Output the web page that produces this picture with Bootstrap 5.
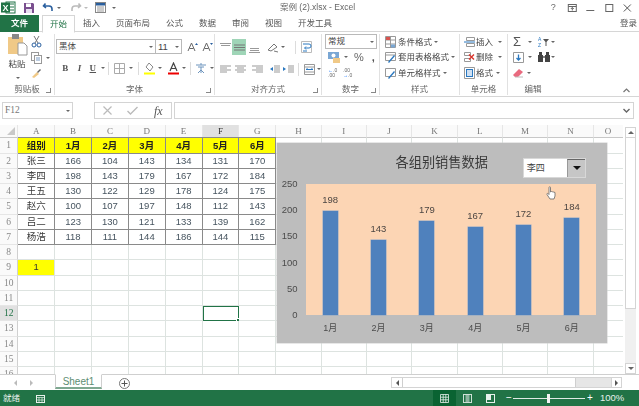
<!DOCTYPE html>
<html lang="zh-CN"><head><meta charset="utf-8"><title>案例 (2).xlsx - Excel</title>
<link href="https://cdn.jsdelivr.net/npm/bootstrap@5.3.0/dist/css/bootstrap.min.css" rel="stylesheet">
<style>
html,body{width:639px;height:406px;overflow:hidden;margin:0;background:#fff}
body{font-family:"Liberation Sans","Noto Sans CJK SC",sans-serif;font-size:8.5px;line-height:1;color:#444}
svg{display:block;flex:none}
.app{width:639px;height:406px;filter:blur(.3px)}
.titlebar{height:15px;padding-left:1px}
.qa-left{width:279px;gap:0}
.doc-title{color:#666;font-size:8.5px}
.win-btns{gap:0;color:#666}
.win-btns>*{width:18.6px;display:flex;justify-content:center}
.tabbar{height:17px;border-bottom:1px solid #d6d6d6;color:#555}
.xtab{padding:0 8px;line-height:17px;height:17px;white-space:nowrap}
.xtab-file{width:39px;margin-right:3px;background:#217346;color:#fff;text-align:center;padding:0;font-weight:700}
.xtab-on{color:#217346;border:1px solid #d6d6d6;border-bottom-color:#fff;height:18px;padding:0 7px;line-height:16px;background:#fff}
.login{margin-left:auto;margin-right:2px;line-height:17px}
.ribbon{height:65px;border-bottom:1px solid #d6d6d6}
.rgroup{border-right:1px solid #e1e1e1;margin:2px 0 1px;position:relative}
.rbody{height:50px}
.rbody-pad{padding-top:5px}
.rlabel{height:11px;text-align:center;color:#666;line-height:11px}
.launch{position:absolute;right:3px;bottom:2px;width:5px;height:5px;border-right:1px solid #888;border-bottom:1px solid #888}
.g-clip{width:55px}.g-font{width:160px}.g-align{width:107px}.g-num{width:58px}.g-style{width:80px}.g-cell{width:48px}.g-edit{width:50px;border-right:0}
.rrow{height:16px}
.cr{width:0;height:0;border-left:2px solid transparent;border-right:2px solid transparent;border-top:2px solid #666;flex:none;display:block}
.vsep{width:1px;height:13px;background:#dcdcdc;flex:none}
.fld{border:1px solid #b9b9b9;height:15px;background:#fff;padding:0 2px;line-height:13px;color:#444}
.paste-col{width:29px;padding-left:6px}
.paste-txt{margin-top:4px;margin-left:-1px;margin-bottom:8px}
.clip-col{padding-top:2px;padding-left:2px;gap:4px}
.fnt-name{width:100px}.fnt-size{width:27px;margin-left:-1px}
.xb{width:15px;text-align:center;font-weight:700;font-size:9px;color:#555;font-family:"Liberation Serif",serif}
.hl{background:#9fd5b7;width:14px;height:16px;display:flex;align-items:center;justify-content:center;flex:none}
.st-row{height:15.5px;gap:2px;padding-left:5px;white-space:nowrap}
.fbar{height:28px;padding:5px 5px 6px 2px}
.namebox{width:71px;font-family:"Liberation Serif",serif;color:#777;font-size:9.5px;height:17px;line-height:15px;border-color:#d4d4d4}
.fx-box{width:78px;margin-left:21px;height:17px;border:1px solid #d4d4d4;gap:0}
.fx-box>*{width:26px;display:flex;justify-content:center;text-align:center}
.fx-txt{font-family:"Liberation Serif",serif;font-style:italic;font-size:12px;color:#555}
.fml{margin-left:2px;height:17px;border:1px solid #d4d4d4;padding-right:3px}
.work{height:249px;position:relative;overflow:hidden}
.grid-wrap{width:623px;height:249px;overflow:hidden;position:relative}
.sheetgrid{display:grid;grid-template-columns:18.3px repeat(7,36.85px) repeat(7,45.35px) 30px;grid-template-rows:13.3px repeat(16,15.27px)}
.sheetgrid>div{border-right:1px solid #dde3e0;border-bottom:1px solid #dde3e0;font-size:9.5px;text-align:center;line-height:14px;color:#46545f;white-space:nowrap;position:relative}
.sheetgrid>.ch{background:#fafafa;color:#777;font-family:"Liberation Serif",serif;font-size:9px;line-height:13px;border-color:#e6e6e6;border-bottom-color:#c8c8c8}
.sheetgrid>.rh{background:#fafafa;color:#888;font-family:"Liberation Serif",serif;font-size:9.5px;border-color:#d0d0d0;border-bottom-color:#e6e6e6}
.sheetgrid>.on{background:#e1e1e1;color:#217346}
.sheetgrid>.ch.on{border-bottom:1px solid #217346;color:#333}
.corner::after{content:"";position:absolute;right:2px;bottom:2px;border-style:solid;border-width:0 0 8px 8px;border-color:transparent transparent #c9c9c9 transparent}
.sheetgrid>.th{background:#ff0;color:#222;font-weight:700;border-color:#8a8a8a;border-top:1px solid #8a8a8a;margin-top:-1px;line-height:15px}
.sheetgrid>.bd{border-color:#8a8a8a}
.sheetgrid>.nm{color:#3a3a3a}
.sheetgrid>.ye{background:#ff0;color:#333}
.sheetgrid>.sel{outline:1px solid #217346;outline-offset:-1px}
.sel::after{content:"";position:absolute;right:-2px;bottom:-2px;width:4px;height:4px;background:#217346;border:1px solid #fff}
.xchart{position:absolute;left:276.7px;top:17.5px;width:330px;height:200px;background:#bdbdbd;box-shadow:0 0 0 .5px #cfcfcf}
.ctitle{height:41.5px;text-align:center;font-size:13.2px;line-height:39px;color:#3a3a3a}
.cmain{height:131px}
.yaxis{width:29.3px;margin:-6px 0;padding-right:8.5px;text-align:right;color:#4c4c4c;font-size:9.5px;line-height:12px}
.plot{width:290px;background:#fcd5b4}
.pcol{width:48.33px}
.pval{font-size:9.5px;color:#4c4642;line-height:11px;margin-bottom:6px}
.pbar{width:15px;background:#4f81bd;box-shadow:0 0 0 .5px #8aa5c8}
.cats{padding-left:29.3px;width:319.3px}
.cats>div{width:48.33px;text-align:center;color:#4c4c4c;font-size:9px;line-height:27px}
.combo{position:absolute;left:246px;top:15.4px;width:63.5px;height:20px;background:#fff;border:1px solid #d8d8d8;padding-left:3px;line-height:18px;font-size:9px;color:#444}
.combo-btn{width:18px;height:18px;margin-left:auto;background:#c6c6c6;border-top:1px solid #666;border-left:1px solid #999;display:flex;align-items:center;justify-content:center}
.hand{position:absolute;left:269px;top:43px}
.vscroll{width:16px;height:249px;position:relative;padding:2px 2px 0}
.vb{height:11px;width:11px;border:1px solid #d4d4d4;background:#fff;display:flex;align-items:center;justify-content:center;flex:none}
.vth{height:171px;width:11px;border:1px solid #d4d4d4;border-top:0;background:#fff;flex:none}
.vtr{background:#f0f0f0;width:11px;height:54px;flex:none}
.tri-u{width:0;height:0;border-left:3px solid transparent;border-right:3px solid transparent;border-bottom:3px solid #666}
.tri-d{width:0;height:0;border-left:3px solid transparent;border-right:3px solid transparent;border-top:3px solid #666}
.tabsrow{height:16px;border-top:1px solid #cfcfcf;position:relative;background:#fff}
.nav-arrows{width:55px;gap:13px;padding-left:14px}
.tri-l{width:0;height:0;border-top:3px solid transparent;border-bottom:3px solid transparent;border-right:3px solid #bbb}
.tri-r{width:0;height:0;border-top:3px solid transparent;border-bottom:3px solid transparent;border-left:3px solid #bbb}
.sheettab{width:47px;height:15px;margin-top:-1px;border:1px solid #cfcfcf;border-top-color:#fff;border-bottom:2px solid #7fa891;color:#5d8d72;font-size:10px;line-height:13px;text-align:center;background:#fff}
.addsh{margin-left:17px}
.hscroll{margin-left:auto;margin-right:17px;width:231px;height:11px;border:1px solid #d4d4d4;margin-top:2px}
.hb{width:10px;display:flex;align-items:center;justify-content:center;background:#fff}
.hth{width:174px;background:#fff;border:1px solid #cfcfcf;border-width:0 1px}
.htr{background:#e6e6e6;flex:1}
.hb-r{border-left:1px solid #d4d4d4}
.statusbar{height:16px;background:#217346;color:#e8f1ec;font-size:8.5px;padding-left:3px}
.ready{width:33px}
.st-right{margin-left:auto;height:16px;margin-right:9px}
.vw{width:23px;height:16px;display:flex;align-items:center;justify-content:center}
.vw-on{background:#0a6332}
.zoomtrack{width:72px;height:1px;background:#dfe9e3;position:relative;margin:0 2px 0 2px}
.zoomknob{position:absolute;left:34px;top:-4px;width:3px;height:9px;background:#f2f2f2}
.zoomtxt{width:36px;padding-left:6px;font-size:9.5px;white-space:nowrap}
</style></head><body>
<div class="app d-flex flex-column">
 <div class="titlebar d-flex align-items-center">
  <div class="qa-left d-flex align-items-center">
   <svg width="15" height="13" viewBox="0 0 15 13"><rect x="5" y="1" width="9" height="11" fill="#fff" stroke="#217346"/><path d="M9 3h4M9 6h4M9 9h4" stroke="#217346"/><rect x="0" y="1.500" width="9" height="10" fill="#217346"/><text x="1.600" y="10" font-size="9" font-weight="700" fill="#fff">X</text></svg>
   <svg style="margin-left:7px" width="12" height="12" viewBox="0 0 12 12"><path d="M1 1h9l1 1v9H1z" fill="#7a4f8f"/><rect x="3" y="1.500" width="5" height="3.500" fill="#fff"/><rect x="3" y="7" width="6" height="4" fill="#e8dff0"/></svg>
   <svg style="margin-left:7px" width="12" height="11" viewBox="0 0 12 11"><path d="M3.500 1.500 1.500 4l2.500 2M2 4h5a3 3 0 0 1 3 3v2" fill="none" stroke="#2a5f9e" stroke-width="1.600"/></svg>
   <span class="cr" style="margin-left:3px"></span>
   <svg style="margin-left:9px" width="12" height="11" viewBox="0 0 12 11"><path d="M8.500 1.500 10.500 4 8 6M10 4H5a3 3 0 0 0-3 3v2" fill="none" stroke="#bbb" stroke-width="1.600"/></svg>
   <span class="cr" style="margin-left:2px;border-top-color:#bbb"></span>
   <svg style="margin-left:7px" width="11" height="11" viewBox="0 0 11 11"><rect x=".5" y=".5" width="10" height="10" fill="#fff" stroke="#888"/><rect x="1" y="1" width="9" height="2.500" fill="#2a5f9e"/><path d="M2 5h7M2 7h7M2 9h7" stroke="#999"/></svg>
   <span class="cr" style="margin-left:6px"></span>
  </div>
  <div class="doc-title">案例 (2).xlsx - Excel</div>
  <div class="win-btns ms-auto d-flex align-items-center" style="margin-right:2px">
   <span style="font-size:9px">?</span>
   <svg width="9" height="8" viewBox="0 0 9 8"><rect x=".5" y=".5" width="8" height="7" fill="none" stroke="#666"/><path d="M.5 2.500h8M4.500 6.500V3.500M3 5l1.500-1.500L6 5" fill="none" stroke="#666"/></svg>
   <svg width="8" height="8" viewBox="0 0 8 8"><path d="M0 6.500h8" stroke="#666"/></svg>
   <svg width="8" height="8" viewBox="0 0 8 8"><rect x=".5" y=".5" width="7" height="7" fill="none" stroke="#666"/></svg>
   <svg width="8" height="8" viewBox="0 0 8 8"><path d="M.5.500l7 7M7.500.500l-7 7" stroke="#555"/></svg>
  </div>
 </div>
 <div class="tabbar d-flex">
  <div class="xtab xtab-file">文件</div>
  <div class="xtab xtab-on">开始</div>
  <div class="xtab">插入</div><div class="xtab">页面布局</div><div class="xtab">公式</div><div class="xtab">数据</div><div class="xtab">审阅</div><div class="xtab">视图</div><div class="xtab">开发工具</div>
  <div class="login">登录</div>
 </div>
 <div class="ribbon d-flex">
  <div class="rgroup g-clip">
   <div class="rbody d-flex">
    <div class="paste-col d-flex flex-column align-items-center">
     <svg width="20" height="22" viewBox="0 0 20 22"><rect x="0" y="3" width="15" height="17" fill="#f0c987"/><rect x="4" y="0" width="7" height="5" fill="#888"/><path d="M10 9h6l3 3v9h-9z" fill="#fff" stroke="#999"/></svg>
     <div class="paste-txt">粘贴</div><span class="cr"></span>
    </div>
    <div class="clip-col d-flex flex-column">
     <svg width="11" height="12" viewBox="0 0 11 12"><path d="M3 0l4 7M8 0 4 7" stroke="#777"/><circle cx="3" cy="9" r="2" fill="none" stroke="#2a5f9e"/><circle cx="8" cy="9" r="2" fill="none" stroke="#2a5f9e"/></svg>
     <div class="d-flex align-items-center gap-1"><svg width="11" height="12" viewBox="0 0 11 12"><rect x=".5" y=".5" width="7" height="8" fill="#fff" stroke="#999"/><rect x="3.500" y="3.500" width="7" height="8" fill="#fff" stroke="#999"/><path d="M5 6h4M5 8h4" stroke="#7a9cc4"/></svg><span class="cr"></span></div>
     <svg width="11" height="11" viewBox="0 0 11 11"><path d="M1 9l5-5 2 2-5 4z" fill="#f0c987"/><path d="M6 4l3-3 1 1-3 3z" fill="#666"/></svg>
    </div>
   </div>
   <div class="rlabel">剪贴板</div><span class="launch"></span>
  </div>
  <div class="rgroup g-font">
   <div class="rbody">
    <div class="d-flex align-items-center" style="padding:5px 0 0 1px">
     <div class="fld fnt-name d-flex align-items-center justify-content-between"><span>黑体</span><span class="cr"></span></div>
     <div class="fld fnt-size d-flex align-items-center justify-content-between"><span style="font-size:9.5px">11</span><span class="cr"></span></div>
     <svg style="margin-left:5px" width="11" height="10" viewBox="0 0 11 10"><path d="M1 9 4.500 1 8 9M2.500 6.500h4" fill="none" stroke="#666"/><path d="M8 3l1.500-2L11 3" fill="#2a5f9e"/></svg>
     <svg style="margin-left:4px" width="11" height="10" viewBox="0 0 11 10"><path d="M1 9 4.500 1 8 9M2.500 6.500h4" fill="none" stroke="#666"/><path d="M8 1l1.500 2L11 1" fill="#2a5f9e"/></svg>
    </div>
    <div class="rrow d-flex align-items-center" style="margin-top:6px;padding-left:3px">
     <span class="xb">B</span><span class="xb fst-italic">I</span><span class="xb text-decoration-underline" style="width:13px">U</span><span class="cr" style="margin:0 3px 0 2px"></span>
     <span class="vsep"></span>
     <svg style="margin:0 4px 0 5px" width="11" height="11" viewBox="0 0 11 11"><path d="M.5.500h10v10H.5zM5.500.500v10M.5 5.500h10" fill="none" stroke="#aaa"/></svg><span class="cr"></span>
     <span class="vsep" style="margin-left:5px"></span>
     <svg style="margin:0 3px 0 5px" width="11" height="13" viewBox="0 0 11 13"><path d="M5 1l4 4-3 4-4-4z" fill="#fff" stroke="#888"/><rect y="10.500" width="11" height="2" fill="#ff0"/></svg><span class="cr"></span>
     <svg style="margin:0 3px 0 6px" width="11" height="13" viewBox="0 0 11 13"><path d="M2 9 5.500 1 9 9M3.500 6.500h4" fill="none" stroke="#444" stroke-width="1.200"/><rect y="10.500" width="11" height="2" fill="#e00"/></svg><span class="cr"></span>
     <span class="vsep" style="margin-left:4px"></span>
     <svg style="margin:0 3px 0 4px" width="12" height="12" viewBox="0 0 12 12"><path d="M1 3h10M6 1v2M3 5h6M6 5v6M3 11l3-3 3 3" fill="none" stroke="#6d94bd"/></svg><span class="cr"></span>
    </div>
   </div>
   <div class="rlabel">字体</div><span class="launch"></span>
  </div>
  <div class="rgroup g-align">
   <div class="rbody rbody-pad">
    <div class="rrow d-flex align-items-center" style="padding-left:5px">
     <svg width="11" height="11" viewBox="0 0 11 11"><path d="M0 1.500h11M1 3.500h9" stroke="#999"/></svg>
     <span class="hl" style="margin-left:1px"><svg width="11" height="7" viewBox="0 0 11 7"><path d="M0 1h11M0 3.500h11M0 6h11" stroke="#777"/></svg></span>
     <svg style="margin-left:3px" width="11" height="11" viewBox="0 0 11 11"><path d="M1 6.500h9M1 8.500h9M0 10.500h11" stroke="#999"/></svg>
     <svg style="margin-left:7px" width="12" height="11" viewBox="0 0 12 11"><path d="M1 8l6-6 3 3-6 4zM7 9l4 1" fill="none" stroke="#777"/></svg><span class="cr" style="margin-left:2px"></span>
     <span class="vsep" style="margin-left:10px"></span>
     <svg style="margin-left:5px" width="11" height="12" viewBox="0 0 11 12"><path d="M.5.500h10v11H.5z" fill="none" stroke="#bbb"/><path d="M2 3h6a1.500 1.500 0 0 1 0 4H4M5 5.500 3.500 7 5 8.500M2 10h4" fill="none" stroke="#2a78c0"/></svg>
    </div>
    <div class="rrow d-flex align-items-center" style="margin-top:6px;padding-left:5px">
     <svg width="11" height="8" viewBox="0 0 11 8"><path d="M0 1h11M0 3h7M0 5h11M0 7h7" stroke="#999"/></svg>
     <svg style="margin-left:4px" width="11" height="8" viewBox="0 0 11 8"><path d="M0 1h11M2 3h7M0 5h11M2 7h7" stroke="#999"/></svg>
     <svg style="margin-left:6px" width="11" height="8" viewBox="0 0 11 8"><path d="M0 1h11M4 3h7M0 5h11M4 7h7" stroke="#999"/></svg>
     <svg style="margin-left:6px" width="11" height="8" viewBox="0 0 11 8"><path d="M5 1h6M5 3h6M5 5h6M5 7h6" stroke="#999"/><path d="M4 2 1 4l3 2z" fill="#2a78c0"/></svg>
     <svg style="margin-left:3px" width="11" height="8" viewBox="0 0 11 8"><path d="M5 1h6M5 3h6M5 5h6M5 7h6" stroke="#999"/><path d="M0 2l3 2-3 2z" fill="#2a78c0"/></svg>
     <span class="vsep" style="margin-left:4px"></span>
     <svg style="margin-left:5px" width="11" height="11" viewBox="0 0 11 11"><path d="M.5.500h10v10H.5zM.5 3h10M.5 8h10" fill="none" stroke="#999"/><path d="M2 5.500h7M2 5.500l1.500-1M9 5.500l-1.500-1" stroke="#2a78c0" fill="none"/></svg><span class="cr" style="margin-left:2px"></span>
    </div>
   </div>
   <div class="rlabel">对齐方式</div><span class="launch"></span>
  </div>
  <div class="rgroup g-num">
   <div class="rbody">
    <div class="fld d-flex align-items-center justify-content-between" style="width:52px;margin-left:3px"><span>常规</span><span class="cr"></span></div>
    <div class="rrow d-flex align-items-center" style="padding-left:6px">
     <svg width="12" height="11" viewBox="0 0 12 11"><rect width="11" height="7" fill="#7aa7d4"/><circle cx="5.500" cy="3.500" r="2" fill="#fff"/><rect x="5" y="6" width="7" height="5" fill="#f0c987"/></svg><span class="cr" style="margin-left:4px"></span>
     <span style="font-size:11px;margin-left:6px;color:#666">%</span><span style="font-weight:700;font-size:11px;margin-left:8px;line-height:8px;color:#555">,</span>
    </div>
    <div class="rrow d-flex align-items-center" style="padding-left:6px;font-size:5px;color:#666;line-height:5px">
     <span style="width:15px"><span class="text-primary">←</span>.0<br>.00</span><span><span>.00</span><br><span class="text-primary">→</span>.0</span>
    </div>
   </div>
   <div class="rlabel">数字</div><span class="launch"></span>
  </div>
  <div class="rgroup g-style">
   <div class="rbody">
    <div class="st-row d-flex align-items-center"><svg width="11" height="12" viewBox="0 0 11 12"><path d="M.5.500h10v11H.5zM5.500.500v11M.5 4h10M.5 8h10" fill="#fff" stroke="#999"/><rect x="1" y="1" width="4" height="3" fill="#d9534f"/><rect x="6" y="8.500" width="4" height="3" fill="#7aa7d4"/></svg><span>条件格式</span><span class="cr"></span></div>
    <div class="st-row d-flex align-items-center"><svg width="11" height="12" viewBox="0 0 11 12"><path d="M.5 1.500h10v8H.5zM.5 4h10" fill="#fff" stroke="#999"/><path d="M3 11l6-7 1 1-6 7z" fill="#2a78c0"/></svg><span>套用表格格式</span><span class="cr"></span></div>
    <div class="st-row d-flex align-items-center"><svg width="11" height="12" viewBox="0 0 11 12"><path d="M.5 1.500h10v8H.5z" fill="#fff" stroke="#999"/><path d="M3 11l6-7 1 1-6 7z" fill="#2a78c0"/></svg><span>单元格样式</span><span class="cr"></span></div>
   </div>
   <div class="rlabel">样式</div>
  </div>
  <div class="rgroup g-cell">
   <div class="rbody">
    <div class="st-row d-flex align-items-center" style="padding-left:4px;gap:1px"><svg width="11" height="12" viewBox="0 0 11 12"><path d="M2.500 1.500h8v3h-8zM2.500 7.500h8v3h-8z" fill="#fff" stroke="#999"/><path d="M0 6h11" stroke="#2a78c0"/></svg><span>插入</span><span class="cr" style="margin-left:4px"></span></div>
    <div class="st-row d-flex align-items-center" style="padding-left:4px;gap:1px"><svg width="11" height="12" viewBox="0 0 11 12"><path d="M.5 1.500h6v3h-6zM.5 7.500h6v3h-6z" fill="#fff" stroke="#999"/><path d="M5 3.500l5 5M10 3.500l-5 5" stroke="#d9342b" stroke-width="1.400"/></svg><span>删除</span><span class="cr" style="margin-left:4px"></span></div>
    <div class="st-row d-flex align-items-center" style="padding-left:4px;gap:1px"><svg width="11" height="12" viewBox="0 0 11 12"><path d="M.5.500h10v11H.5z" fill="#fff" stroke="#999"/><rect x="2.500" y="2.500" width="6" height="7" fill="#cfe0f2" stroke="#2a78c0"/></svg><span>格式</span><span class="cr" style="margin-left:2px"></span></div>
   </div>
   <div class="rlabel">单元格</div>
  </div>
  <div class="rgroup g-edit">
   <div class="rbody">
    <div class="st-row d-flex align-items-center" style="gap:0;padding-left:5px"><span style="font-size:13px;color:#555;width:11px;line-height:12px">Σ</span><span class="cr" style="margin-left:4px"></span>
     <svg style="margin-left:6px" width="11" height="12" viewBox="0 0 11 12"><text x="0" y="5" font-size="5" fill="#2a78c0">A</text><text x="0" y="11" font-size="5" fill="#2a78c0">Z</text><path d="M5 3h6L8.500 6v4h-1V6z" fill="#555"/></svg><span class="cr" style="margin-left:2px"></span></div>
    <div class="st-row d-flex align-items-center" style="gap:0;padding-left:5px"><svg width="11" height="11" viewBox="0 0 11 11"><path d="M.5.500h10v10H.5z" fill="#fff" stroke="#999"/><path d="M5.500 2.500v5M3.500 6l2 2 2-2" fill="none" stroke="#2a78c0" stroke-width="1.300"/></svg><span class="cr" style="margin-left:4px"></span>
     <svg style="margin-left:6px" width="12" height="10" viewBox="0 0 12 10"><rect x="0" y="3" width="5" height="7" fill="#444"/><rect x="7" y="3" width="5" height="7" fill="#444"/><rect x="1" y="0" width="3" height="4" fill="#444"/><rect x="8" y="0" width="3" height="4" fill="#444"/><rect x="5" y="4" width="2" height="2" fill="#888"/></svg><span class="cr" style="margin-left:1px"></span></div>
    <div class="st-row d-flex align-items-center" style="gap:0;padding-left:5px"><svg width="11" height="10" viewBox="0 0 11 10"><path d="M0 7l6-6 4 3-5 5H2z" fill="#e96a7f"/><path d="M2 9h8" stroke="#bbb"/></svg><span class="cr" style="margin-left:3px"></span></div>
   </div>
   <div class="rlabel">编辑</div>
  </div>
  <svg class="ms-auto align-self-end" style="margin:0 9px 3px 0" width="7" height="5" viewBox="0 0 7 5"><path d="M.5 4 3.500 1l3 3" fill="none" stroke="#777" stroke-width="1.200"/></svg>
 </div>
 <div class="fbar d-flex align-items-center">
  <div class="fld namebox d-flex align-items-center justify-content-between"><span>F12</span><span class="cr"></span></div>
  <div class="fx-box d-flex align-items-center">
   <span><svg width="9" height="9" viewBox="0 0 9 9"><path d="M.5.500l8 8M8.500.500l-8 8" stroke="#bbb" stroke-width="1.200"/></svg></span>
   <span><svg width="11" height="9" viewBox="0 0 11 9"><path d="M.5 5l3 3 7-7" fill="none" stroke="#bbb" stroke-width="1.400"/></svg></span>
   <span class="fx-txt">fx</span>
  </div>
  <div class="fml flex-grow-1 d-flex align-items-center justify-content-end"><svg width="7" height="5" viewBox="0 0 7 5"><path d="M.5 1l3 3 3-3" fill="none" stroke="#666" stroke-width="1.400"/></svg></div>
 </div>
 <div class="work d-flex">
  <div class="grid-wrap">
   <div class="sheetgrid">
    <div class="corner ch"></div><div class="ch">A</div><div class="ch">B</div><div class="ch">C</div><div class="ch">D</div><div class="ch">E</div><div class="ch on">F</div><div class="ch">G</div><div class="ch">H</div><div class="ch">I</div><div class="ch">J</div><div class="ch">K</div><div class="ch">L</div><div class="ch">M</div><div class="ch">N</div><div class="ch">O</div>
    <div class="rh">1</div><div class="th">组别</div><div class="th">1月</div><div class="th">2月</div><div class="th">3月</div><div class="th">4月</div><div class="th">5月</div><div class="th">6月</div><div></div><div></div><div></div><div></div><div></div><div></div><div></div><div></div>
    <div class="rh">2</div><div class="bd nm">张三</div><div class="bd">166</div><div class="bd">104</div><div class="bd">143</div><div class="bd">134</div><div class="bd">131</div><div class="bd">170</div><div></div><div></div><div></div><div></div><div></div><div></div><div></div><div></div>
    <div class="rh">3</div><div class="bd nm">李四</div><div class="bd">198</div><div class="bd">143</div><div class="bd">179</div><div class="bd">167</div><div class="bd">172</div><div class="bd">184</div><div></div><div></div><div></div><div></div><div></div><div></div><div></div><div></div>
    <div class="rh">4</div><div class="bd nm">王五</div><div class="bd">130</div><div class="bd">122</div><div class="bd">129</div><div class="bd">178</div><div class="bd">124</div><div class="bd">175</div><div></div><div></div><div></div><div></div><div></div><div></div><div></div><div></div>
    <div class="rh">5</div><div class="bd nm">赵六</div><div class="bd">100</div><div class="bd">107</div><div class="bd">197</div><div class="bd">148</div><div class="bd">112</div><div class="bd">143</div><div></div><div></div><div></div><div></div><div></div><div></div><div></div><div></div>
    <div class="rh">6</div><div class="bd nm">吕二</div><div class="bd">123</div><div class="bd">130</div><div class="bd">121</div><div class="bd">133</div><div class="bd">139</div><div class="bd">162</div><div></div><div></div><div></div><div></div><div></div><div></div><div></div><div></div>
    <div class="rh">7</div><div class="bd nm">杨浩</div><div class="bd">118</div><div class="bd">111</div><div class="bd">144</div><div class="bd">186</div><div class="bd">144</div><div class="bd">115</div><div></div><div></div><div></div><div></div><div></div><div></div><div></div><div></div>
    <div class="rh">8</div><div></div><div></div><div></div><div></div><div></div><div></div><div></div><div></div><div></div><div></div><div></div><div></div><div></div><div></div><div></div>
    <div class="rh">9</div><div class="ye">1</div><div></div><div></div><div></div><div></div><div></div><div></div><div></div><div></div><div></div><div></div><div></div><div></div><div></div><div></div>
    <div class="rh">10</div><div></div><div></div><div></div><div></div><div></div><div></div><div></div><div></div><div></div><div></div><div></div><div></div><div></div><div></div><div></div>
    <div class="rh">11</div><div></div><div></div><div></div><div></div><div></div><div></div><div></div><div></div><div></div><div></div><div></div><div></div><div></div><div></div><div></div>
    <div class="rh on">12</div><div></div><div></div><div></div><div></div><div></div><div class="sel"></div><div></div><div></div><div></div><div></div><div></div><div></div><div></div><div></div><div></div>
    <div class="rh">13</div><div></div><div></div><div></div><div></div><div></div><div></div><div></div><div></div><div></div><div></div><div></div><div></div><div></div><div></div><div></div>
    <div class="rh">14</div><div></div><div></div><div></div><div></div><div></div><div></div><div></div><div></div><div></div><div></div><div></div><div></div><div></div><div></div><div></div>
    <div class="rh">15</div><div></div><div></div><div></div><div></div><div></div><div></div><div></div><div></div><div></div><div></div><div></div><div></div><div></div><div></div><div></div>
    <div class="rh">16</div><div></div><div></div><div></div><div></div><div></div><div></div><div></div><div></div><div></div><div></div><div></div><div></div><div></div><div></div><div></div>
   </div>
   <div class="xchart">
    <div class="ctitle">各组别销售数据</div>
    <div class="cmain d-flex">
     <div class="yaxis d-flex flex-column justify-content-between"><span>250</span><span>200</span><span>150</span><span>100</span><span>50</span><span>0</span></div>
     <div class="plot d-flex">
      <div class="pcol d-flex flex-column align-items-center justify-content-end"><div class="pval">198</div><div class="pbar" style="height:104px"></div></div>
      <div class="pcol d-flex flex-column align-items-center justify-content-end"><div class="pval">143</div><div class="pbar" style="height:75px"></div></div>
      <div class="pcol d-flex flex-column align-items-center justify-content-end"><div class="pval">179</div><div class="pbar" style="height:94px"></div></div>
      <div class="pcol d-flex flex-column align-items-center justify-content-end"><div class="pval">167</div><div class="pbar" style="height:87.700px"></div></div>
      <div class="pcol d-flex flex-column align-items-center justify-content-end"><div class="pval">172</div><div class="pbar" style="height:90.300px"></div></div>
      <div class="pcol d-flex flex-column align-items-center justify-content-end"><div class="pval">184</div><div class="pbar" style="height:96.600px"></div></div>
     </div>
    </div>
    <div class="cats d-flex"><div>1月</div><div>2月</div><div>3月</div><div>4月</div><div>5月</div><div>6月</div></div>
    <div class="combo d-flex"><span>李四</span><span class="combo-btn"><span class="tri-d" style="border-width:4px 4px 0;border-top-color:#111"></span></span></div>
    <svg class="hand" width="11" height="14" viewBox="0 0 11 14"><path d="M3 1.500c0-1 1.500-1 1.500 0V6l1-.5 1 .3 1 .2 1.500.5V10l-1 3H4L1 8.500c-.5-1 .7-1.500 1.400-.7L3 8.500z" fill="#fff" stroke="#666" stroke-width=".8"/></svg>
   </div>
  </div>
  <div class="vscroll d-flex flex-column">
   <div class="vb"><span class="tri-u"></span></div>
   <div class="vth"></div>
   <div class="vtr"></div>
   <div class="vb"><span class="tri-d"></span></div>
  </div>
 </div>
 <div class="tabsrow d-flex">
  <div class="nav-arrows d-flex align-items-center"><span class="tri-l"></span><span class="tri-r"></span></div>
  <div class="sheettab">Sheet1</div>
  <svg class="addsh" style="margin-top:3px" width="11" height="11" viewBox="0 0 11 11"><circle cx="5.500" cy="5.500" r="5" fill="#fff" stroke="#777"/><path d="M5.500 2.500v6M2.500 5.500h6" stroke="#555"/></svg>
  <div class="hscroll d-flex">
   <div class="hb"><span class="tri-l" style="border-right-color:#555"></span></div>
   <div class="hth"></div><div class="htr"></div>
   <div class="hb hb-r"><span class="tri-r" style="border-left-color:#555"></span></div>
  </div>
 </div>
 <div class="statusbar d-flex align-items-center">
  <div class="ready">就绪</div>
  <svg width="9" height="9" viewBox="0 0 9 9"><rect x=".5" y="1.500" width="8" height="7" fill="none" stroke="#e8f1ec"/><path d="M.5 3.500h8M3 3.500v5M6 3.500v5M.5 6h8" stroke="#e8f1ec" stroke-width=".7"/></svg>
  <div class="st-right d-flex align-items-center">
   <span class="vw vw-on"><svg width="9" height="9" viewBox="0 0 9 9"><path d="M.5.500h8v8h-8zM3.200.500v8M5.800.500v8M.5 3.200h8M.5 5.800h8" fill="none" stroke="#e8f1ec" stroke-width=".8"/></svg></span>
   <span class="vw"><svg width="9" height="9" viewBox="0 0 9 9"><rect x=".5" y=".5" width="8" height="8" fill="none" stroke="#cfe0d6"/><rect x="2.500" y="1" width="4" height="7" fill="#8db39f"/></svg></span>
   <span class="vw"><svg width="9" height="9" viewBox="0 0 9 9"><rect x=".5" y=".5" width="8" height="8" fill="#217346" stroke="#e8f1ec"/><rect x="1" y="1" width="4" height="5" fill="#e8f1ec"/></svg></span>
   <span style="font-size:10px;color:#fff;line-height:10px;margin-left:4px;width:5px">−</span>
   <span class="zoomtrack"><span class="zoomknob"></span></span>
   <span style="font-size:10px;color:#fff;line-height:10px;width:7px">+</span>
   <span class="zoomtxt">100%</span>
  </div>
 </div>
</div>
</body></html>
